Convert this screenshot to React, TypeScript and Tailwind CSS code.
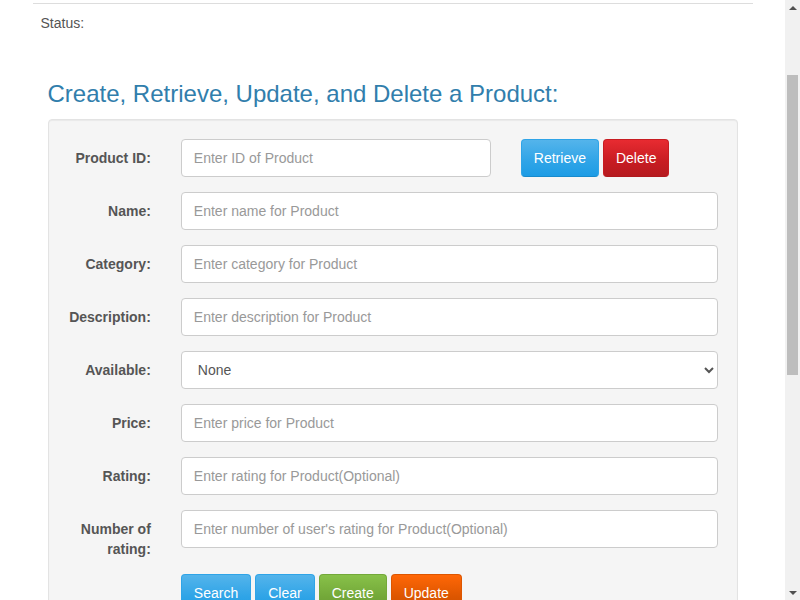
import { useEffect } from "react"

const btnBase =
  "inline-block px-[12px] py-[8px] text-[14px] leading-[20px] text-white rounded-[4px] border border-solid"

const btnPrimary =
  "bg-[linear-gradient(#54b4eb,#2fa4e7_60%,#1d9ce5)] border-[#2fa4e7] border-b-[#178acc]"
const btnDanger =
  "bg-[linear-gradient(#e72b31,#c71c22_60%,#b61a1f)] border-[#c71c22] border-b-[#b0181d]"
const btnSuccess =
  "bg-[linear-gradient(#88c149,#73a839_60%,#699934)] border-[#73a839] border-b-[#5a842c]"
const btnWarning =
  "bg-[linear-gradient(#ff6707,#dd5600_60%,#c94e00)] border-[#dd5600] border-b-[#c44c00]"

const inputCls =
  "block w-full h-[38px] px-[12px] py-[8px] text-[14px] leading-[20px] text-[#555] bg-white border border-[#ccc] rounded-[4px] placeholder:text-[#999] outline-none font-['Liberation_Sans',Arial,sans-serif]"

function Row({ label, children }: { label: string; children: React.ReactNode }) {
  return (
    <div className="flex -mx-[15px] mb-[15px]">
      <label className="w-[113.33px] shrink-0 px-[15px] pt-[9px] text-right font-bold text-[14px] leading-[20px] text-[#555]">
        {label}
      </label>
      <div className="flex-1 px-[15px]">{children}</div>
    </div>
  )
}

// page scrollbar, as the browser draws it
function Scrollbar() {
  return (
    <div className="fixed top-0 right-0 h-screen w-[15px] bg-[#f1f1f1] flex flex-col items-center">
      <div className="h-[15px] flex items-center justify-center">
        <div className="w-0 h-0 border-x-[4px] border-x-transparent border-b-[4px] border-b-[#505050]" />
      </div>
      <div className="flex-1 w-full relative">
        <div className="absolute left-[2px] right-[2px] top-[60px] h-[300px] bg-[#bdbdbd]" />
      </div>
      <div className="h-[15px] flex items-center justify-center">
        <div className="w-0 h-0 border-x-[4px] border-x-transparent border-t-[4px] border-t-[#505050]" />
      </div>
    </div>
  )
}

export default function App() {
  useEffect(() => {
    window.scrollTo(0, 120)
  }, [])

  return (
    <div className="bg-white pr-[15px] text-[#555] text-[14px] leading-[20px] font-['Liberation_Sans',Arial,sans-serif]">
      <div className="w-[750px] mx-auto px-[15px]">
        {/* Header area (scrolled out of view) */}
        <div className="h-[123px] pt-[40px]">
          <h1 className="text-[36px] leading-[40px] text-[#317eac]">Product Catalog Administration</h1>
        </div>

        <div className="border-t border-[#ddd]" />

        <div className="pl-[8px] pt-[9px] h-[30px]">Status:</div>

        <div className="px-[15px]">
          <h3 className="mt-[47px] mb-[12px] text-[24px] leading-[26.4px] text-[#317eac]">
            Create, Retrieve, Update, and Delete a Product:
          </h3>

          <div className="bg-[#f5f5f5] border border-[#e3e3e3] rounded-[4px] p-[19px] shadow-[inset_0_1px_1px_rgba(0,0,0,0.05)] mb-[20px]">
            <div className="flex -mx-[15px] mb-[15px]">
              <label className="w-[113.33px] shrink-0 px-[15px] pt-[9px] text-right font-bold text-[14px] leading-[20px] text-[#555]">
                Product ID:
              </label>
              <div className="w-[340px] shrink-0 px-[15px]">
                <input className={inputCls} placeholder="Enter ID of Product" />
              </div>
              <div className="px-[15px] flex gap-[4px]">
                <button className={`${btnBase} ${btnPrimary}`}>Retrieve</button>
                <button className={`${btnBase} ${btnDanger}`}>Delete</button>
              </div>
            </div>

            <Row label="Name:">
              <input className={inputCls} placeholder="Enter name for Product" />
            </Row>
            <Row label="Category:">
              <input className={inputCls} placeholder="Enter category for Product" />
            </Row>
            <Row label="Description:">
              <input className={inputCls} placeholder="Enter description for Product" />
            </Row>
            <Row label="Available:">
              <select className={`${inputCls} px-[12px]`} defaultValue="None">
                <option>None</option>
                <option>True</option>
                <option>False</option>
              </select>
            </Row>
            <Row label="Price:">
              <input className={inputCls} placeholder="Enter price for Product" />
            </Row>
            <Row label="Rating:">
              <input className={inputCls} placeholder="Enter rating for Product(Optional)" />
            </Row>
            <Row label="Number of rating:">
              <input
                className={inputCls}
                placeholder="Enter number of user's rating for Product(Optional)"
              />
            </Row>

            <div className="flex -mx-[15px]">
              <div className="w-[113.33px] shrink-0" />
              <div className="px-[15px] flex gap-[4px]">
                <button className={`${btnBase} ${btnPrimary}`}>Search</button>
                <button className={`${btnBase} ${btnPrimary}`}>Clear</button>
                <button className={`${btnBase} ${btnSuccess}`}>Create</button>
                <button className={`${btnBase} ${btnWarning}`}>Update</button>
              </div>
            </div>
          </div>

          {/* Results area below the fold */}
          <div className="h-[353px]">
            <h3 className="text-[24px] leading-[26.4px] text-[#317eac]">Search Results</h3>
          </div>
        </div>
      </div>
      <Scrollbar />
    </div>
  )
}
